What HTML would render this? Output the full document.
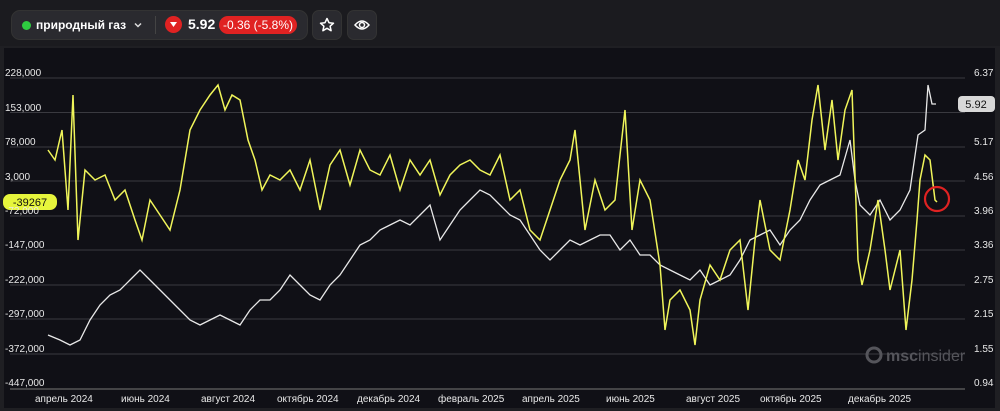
<!DOCTYPE html>
<html><head><meta charset="utf-8"><style>
body{margin:0;width:1000px;height:411px;background:#1f1f23;font-family:"Liberation Sans",sans-serif;overflow:hidden;position:relative}
.top{position:absolute;left:0;top:0;width:1000px;height:46px;background:#1b1b1f}
.pill{position:absolute;left:11px;top:10px;width:295px;height:28px;background:#2a2a2f;border-radius:9px;border:1px solid #333}
.btn{position:absolute;top:10px;width:28px;height:28px;background:#2a2a2f;border-radius:7px;border:1px solid #333}
.panel{position:absolute;left:4px;top:48px;width:991px;height:360px;background:#101016}
.t{position:absolute;color:#e8e8e8;font-size:10px}
</style></head><body>
<div class="top"></div>
<div class="pill">
 <div style="position:absolute;left:10px;top:10px;width:9px;height:9px;border-radius:50%;background:#2ecc40"></div>
 <div style="position:absolute;left:24px;top:7px;color:#fff;font-size:12px;font-weight:bold">природный газ</div>
 <svg style="position:absolute;left:122px;top:10px" width="8" height="8"><path d="M1 2.5l3 3 3-3" fill="none" stroke="#ddd" stroke-width="1.5"/></svg>
 <div style="position:absolute;left:143px;top:5px;width:1px;height:18px;background:#444"></div>
 <div style="position:absolute;left:153px;top:5px;width:17px;height:17px;border-radius:50%;background:#e02222"><svg width="17" height="17"><path d="M5 6h7l-3.5 5z" fill="#fff"/></svg></div>
 <div style="position:absolute;left:176px;top:5px;color:#fff;font-size:14px;font-weight:bold">5.92</div>
 <div style="position:absolute;left:207px;top:5px;width:78px;height:18px;border-radius:9px;background:#e02222;color:#fff;font-size:12px;text-align:center;line-height:18px">-0.36 (-5.8%)</div>
</div>
<div class="btn" style="left:312px"><svg width="28" height="28"><path d="M14 7.5l2 4.2 4.5.5-3.4 3 1 4.5-4.1-2.4-4.1 2.4 1-4.5-3.4-3 4.5-.5z" fill="none" stroke="#fff" stroke-width="1.5" stroke-linejoin="round"/></svg></div>
<div class="btn" style="left:347px"><svg width="28" height="28"><path d="M7 14q7-8 14 0q-7 8-14 0z" fill="none" stroke="#fff" stroke-width="1.5"/><circle cx="14" cy="14" r="2.5" fill="none" stroke="#fff" stroke-width="1.5"/></svg></div>
<div class="panel"></div>
<svg style="position:absolute;left:0;top:0" width="1000" height="411">
<g stroke="#3a3a40" stroke-width="1">
<line x1="10" y1="78" x2="965" y2="78"/><line x1="10" y1="112.5" x2="965" y2="112.5"/><line x1="10" y1="147" x2="965" y2="147"/><line x1="10" y1="181" x2="965" y2="181"/><line x1="10" y1="216" x2="965" y2="216"/><line x1="10" y1="250" x2="965" y2="250"/><line x1="10" y1="285" x2="965" y2="285"/><line x1="10" y1="319" x2="965" y2="319"/><line x1="10" y1="354" x2="965" y2="354"/>
</g>
<line x1="10" y1="389" x2="965" y2="389" stroke="#777"/>
<polyline fill="none" stroke="#e8e8e8" stroke-width="1.3" points="48,335 60,340 70,345 80,340 90,320 100,305 110,295 120,290 130,280 140,270 150,280 160,290 170,300 180,310 190,320 200,325 210,320 220,315 230,320 240,325 250,310 260,300 270,300 280,290 290,275 300,285 310,295 320,300 330,285 340,275 350,260 360,245 370,240 380,230 390,225 400,220 410,225 420,215 430,205 440,240 450,225 460,210 470,200 480,190 490,195 500,205 510,215 520,220 530,235 540,250 550,260 560,250 570,240 580,245 590,240 600,235 610,235 620,250 630,240 640,255 650,255 660,265 670,270 680,275 690,280 700,270 710,285 720,280 730,275 740,260 750,240 760,235 770,230 780,245 790,230 800,220 810,200 820,185 830,180 840,175 850,140 855,180 860,205 870,215 880,200 890,220 900,210 910,190 918,135 925,130 928,85 932,104 936,104"/>
<polyline fill="none" stroke="#f0f55a" stroke-width="1.5" points="48,150 55,160 62,130 68,210 73,95 78,240 85,170 95,180 105,175 115,200 125,190 135,220 142,240 150,200 160,215 170,230 180,190 190,130 200,110 210,95 218,85 225,110 232,95 240,100 248,140 255,160 262,190 270,175 280,180 290,170 300,190 310,160 320,210 330,165 340,150 350,185 360,150 370,170 380,175 390,155 400,190 410,160 420,175 430,160 440,195 450,175 460,165 470,160 480,170 490,175 500,155 510,200 520,190 530,230 540,240 550,210 560,180 570,160 575,130 585,230 595,180 605,210 615,200 625,110 632,230 640,180 650,200 660,265 665,330 670,300 680,290 690,310 695,345 700,300 710,265 720,280 730,250 740,240 748,310 755,240 760,200 770,250 780,260 790,210 798,160 805,180 812,120 818,85 825,150 832,100 838,160 845,110 852,90 858,260 862,285 870,250 878,200 885,250 890,290 900,250 906,330 912,280 917,220 920,180 925,155 930,160 935,200 937,202"/>
<circle cx="937" cy="199" r="12" fill="none" stroke="#e02222" stroke-width="2.2"/>
<rect x="3" y="194" width="54" height="16" rx="7" fill="#e6f53c"/>
<text x="30" y="206" font-size="11" text-anchor="middle" fill="#111" font-family="Liberation Sans">-39267</text>
<rect x="958" y="96" width="37" height="16" rx="4" fill="#d8d8d8"/>
<text x="976" y="108" font-size="11" text-anchor="middle" fill="#111" font-family="Liberation Sans">5.92</text>
<circle cx="874" cy="355" r="7" fill="none" stroke="#55555b" stroke-width="3"/>
<text x="886" y="361" font-size="16" fill="#55555b" font-family="Liberation Sans"><tspan font-weight="bold">msc</tspan>insider</text>
</svg>
<div class="t" style="left:5px;top:68px">228,000</div>
<div class="t" style="left:5px;top:103px">153,000</div>
<div class="t" style="left:5px;top:137px">78,000</div>
<div class="t" style="left:5px;top:172px">3,000</div>
<div class="t" style="left:5px;top:206px">-72,000</div>
<div class="t" style="left:5px;top:240px">-147,000</div>
<div class="t" style="left:5px;top:275px">-222,000</div>
<div class="t" style="left:5px;top:309px">-297,000</div>
<div class="t" style="left:5px;top:344px">-372,000</div>
<div class="t" style="left:5px;top:378px">-447,000</div>
<div class="t" style="left:974px;top:68px">6.37</div>
<div class="t" style="left:974px;top:137px">5.17</div>
<div class="t" style="left:974px;top:172px">4.56</div>
<div class="t" style="left:974px;top:206px">3.96</div>
<div class="t" style="left:974px;top:240px">3.36</div>
<div class="t" style="left:974px;top:275px">2.75</div>
<div class="t" style="left:974px;top:309px">2.15</div>
<div class="t" style="left:974px;top:344px">1.55</div>
<div class="t" style="left:974px;top:378px">0.94</div>
<div class="t" style="left:35px;top:394px">апрель 2024</div>
<div class="t" style="left:121px;top:394px">июнь 2024</div>
<div class="t" style="left:201px;top:394px">август 2024</div>
<div class="t" style="left:277px;top:394px">октябрь 2024</div>
<div class="t" style="left:357px;top:394px">декабрь 2024</div>
<div class="t" style="left:438px;top:394px">февраль 2025</div>
<div class="t" style="left:522px;top:394px">апрель 2025</div>
<div class="t" style="left:606px;top:394px">июнь 2025</div>
<div class="t" style="left:686px;top:394px">август 2025</div>
<div class="t" style="left:760px;top:394px">октябрь 2025</div>
<div class="t" style="left:848px;top:394px">декабрь 2025</div>
</body></html>
